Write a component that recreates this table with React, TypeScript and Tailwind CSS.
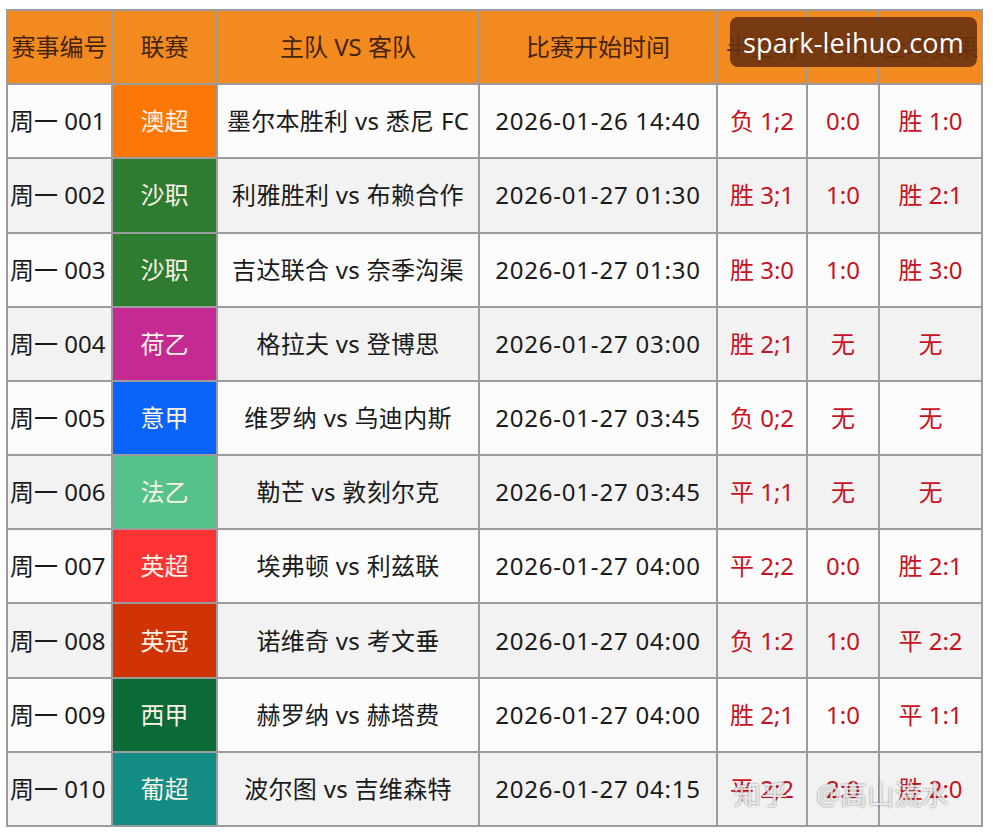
import React from "react";

type Match = {
  no: string;
  league: string;
  color: string;
  teams: string;
  time: string;
  a: string;
  b: string;
  c: string;
};

const matches: Match[] = [
  { no: "周一 001", league: "澳超", color: "bg-[#fc7706]", teams: "墨尔本胜利 vs 悉尼 FC", time: "2026-01-26 14:40", a: "负 1;2", b: "0:0", c: "胜 1:0" },
  { no: "周一 002", league: "沙职", color: "bg-[#2e7b32]", teams: "利雅胜利 vs 布赖合作", time: "2026-01-27 01:30", a: "胜 3;1", b: "1:0", c: "胜 2:1" },
  { no: "周一 003", league: "沙职", color: "bg-[#2e7b32]", teams: "吉达联合 vs 奈季沟渠", time: "2026-01-27 01:30", a: "胜 3:0", b: "1:0", c: "胜 3:0" },
  { no: "周一 004", league: "荷乙", color: "bg-[#c42a92]", teams: "格拉夫 vs 登博思", time: "2026-01-27 03:00", a: "胜 2;1", b: "无", c: "无" },
  { no: "周一 005", league: "意甲", color: "bg-[#0a63fb]", teams: "维罗纳 vs 乌迪内斯", time: "2026-01-27 03:45", a: "负 0;2", b: "无", c: "无" },
  { no: "周一 006", league: "法乙", color: "bg-[#55c18b]", teams: "勒芒 vs 敦刻尔克", time: "2026-01-27 03:45", a: "平 1;1", b: "无", c: "无" },
  { no: "周一 007", league: "英超", color: "bg-[#fe3434]", teams: "埃弗顿 vs 利兹联", time: "2026-01-27 04:00", a: "平 2;2", b: "0:0", c: "胜 2:1" },
  { no: "周一 008", league: "英冠", color: "bg-[#d03404]", teams: "诺维奇 vs 考文垂", time: "2026-01-27 04:00", a: "负 1:2", b: "1:0", c: "平 2:2" },
  { no: "周一 009", league: "西甲", color: "bg-[#0c6a36]", teams: "赫罗纳 vs 赫塔费", time: "2026-01-27 04:00", a: "胜 2;1", b: "1:0", c: "平 1:1" },
  { no: "周一 010", league: "葡超", color: "bg-[#148c86]", teams: "波尔图 vs 吉维森特", time: "2026-01-27 04:15", a: "平 2;2", b: "2:0", c: "胜 2:0" },
];

const headers = ["赛事编号", "联赛", "主队 VS 客队", "比赛开始时间", "半全场", "半场", "全场赛果"];

const font = "font-['Noto_Sans','Noto_Sans_CJK_SC',sans-serif]";

export default function App() {
  return (
    <div className={`w-[993px] h-[836px] bg-white pt-[9px] pl-[6px] ${font}`}>
      <div className="relative w-[977px] h-[818px] bg-[#9c9c9c] p-[2px] grid grid-cols-[103px_103px_260px_236px_88px_70px_101px] grid-rows-[repeat(11,minmax(0,1fr))] gap-[2px] text-[24px] leading-none">
        {headers.map((h) => (
          <div key={h} className="bg-[#f28a1f] flex items-center justify-center text-[#45230f] whitespace-nowrap">
            {h}
          </div>
        ))}
        {matches.map((m, i) => {
          const bg = i % 2 === 0 ? "bg-[#fcfcfc]" : "bg-[#f2f2f2]";
          return (
            <React.Fragment key={m.no}>
              <div className={`${bg} flex items-center justify-start pl-[2px] text-[#1a1a1a] whitespace-nowrap`}>{m.no}</div>
              <div className={`${m.color} flex items-center justify-center text-[#fbf3e6]`}>{m.league}</div>
              <div className={`${bg} flex items-center justify-center text-[#1a1a1a] whitespace-nowrap tracking-[0.3px]`}>{m.teams}</div>
              <div className={`${bg} flex items-center justify-center text-[#1a1a1a] whitespace-nowrap tracking-[0.8px]`}>{m.time}</div>
              <div className={`${bg} flex items-center justify-center text-[#c8121f] whitespace-nowrap`}>{m.a}</div>
              <div className={`${bg} flex items-center justify-center text-[#c8121f] whitespace-nowrap`}>{m.b}</div>
              <div className={`${bg} flex items-center justify-center text-[#c8121f] whitespace-nowrap`}>{m.c}</div>
            </React.Fragment>
          );
        })}

        <div className="absolute left-[724px] top-[8px] w-[247px] h-[50px] rounded-[8px] bg-[#6a320f]/90 flex items-center justify-center text-white text-[27px] font-['Open_Sans',sans-serif] tracking-[0.2px]">
          spark-leihuo.com
        </div>
        <div className="absolute left-[728px] top-[772px] flex items-center gap-[28px] text-white/80 text-[27px] [text-shadow:0_0_2px_rgba(0,0,0,0.55)]">
          <span>知乎</span>
          <span>@高山流水</span>
        </div>
      </div>
    </div>
  );
}
